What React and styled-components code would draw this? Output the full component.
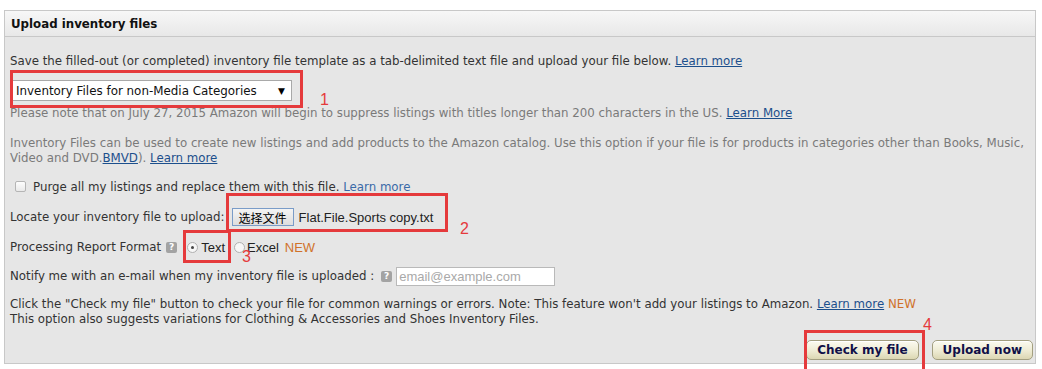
import React from "react";
import styled, { createGlobalStyle } from "styled-components";

const Global = createGlobalStyle`
  html, body {
    margin: 0;
    padding: 0;
    background: #fff;
  }
  body {
    font-family: "DejaVu Sans", Verdana, sans-serif;
    font-size: 11.8px;
    color: #333;
  }
`;

const Page = styled.div`
  position: relative;
  width: 1042px;
  height: 369px;
  overflow: hidden;
  padding: 10px 6px 0 4px;
  box-sizing: border-box;
`;

const Panel = styled.div`
  border: 1px solid #c8c8c8;
  background: #e6e6e6;
`;

const Header = styled.div`
  height: 25px;
  display: flex;
  align-items: center;
  padding: 0 6px;
  background: linear-gradient(#f7f7f7, #e8e8e8);
  border-bottom: 1px solid #c8c8c8;
  font-weight: bold;
  color: #111;
  font-size: 11.8px;
`;

const Body = styled.div`
  padding: 17px 2px 3px 5px;
`;

const Line = styled.div`
  margin-top: ${(p) => p.$mt || 0}px;
  line-height: 15px;
  white-space: nowrap;
  color: ${(p) => (p.$muted ? "#7a7a7a" : "#333")};
`;

const Row = styled.div`
  margin-top: ${(p) => p.$mt || 0}px;
  height: ${(p) => p.$h || 15}px;
  display: flex;
  align-items: center;
  white-space: nowrap;
`;

const Link = styled.a`
  color: ${(p) => (p.$plain ? "#3a6aa8" : "#1c4f8c")};
  text-decoration: ${(p) => (p.$plain ? "none" : "underline")};
  cursor: pointer;
`;

const New = styled.span`
  color: #d0722b;
`;

const Select = styled.div`
  margin-top: 11px;
  width: 280px;
  height: 21px;
  margin-left: 2px;
  box-sizing: border-box;
  background: #fff;
  border: 1px solid #a9a9a9;
  display: flex;
  align-items: center;
  justify-content: space-between;
  padding: 0 6px 0 3px;
  color: #111;
  font-size: 11.9px;
`;

const Arrow = styled.span`
  font-size: 9px;
  color: #000;
`;

const CheckBox = styled.span`
  width: 9px;
  height: 9px;
  border: 1px solid #b5b5b5;
  border-radius: 2px;
  background: linear-gradient(#fdfdfd, #e9e9e9);
  margin: 0 7px 0 5px;
`;

const FileButton = styled.span`
  margin-left: 7px;
  height: 18px;
  box-sizing: border-box;
  padding: 0 6px;
  display: flex;
  align-items: center;
  border: 1px solid #7a9cc8;
  background: linear-gradient(#f4f4f4, #dedede);
  font-family: "Noto Sans CJK SC", sans-serif;
  font-size: 12px;
  color: #000;
`;

const Sans = styled.span`
  font-family: "Liberation Sans", Arial, sans-serif;
  font-size: ${(p) => p.$size || 13}px;
  color: ${(p) => p.$color || "#222"};
  margin-left: ${(p) => p.$ml || 0}px;
`;

const Help = styled.span`
  width: 11px;
  height: 11px;
  border-radius: 2px;
  background: #a3a3a3;
  color: #fff;
  font-size: 9px;
  font-weight: bold;
  display: inline-flex;
  align-items: center;
  justify-content: center;
  margin: 0 ${(p) => p.$mr || 5}px 0 ${(p) => p.$ml || 5}px;
  line-height: 1;
`;

const Radio = styled.span`
  width: 9px;
  height: 9px;
  border-radius: 50%;
  border: 1px solid #b0b0b0;
  background: #f7f7f7;
  display: inline-flex;
  align-items: center;
  justify-content: center;
  margin: 0 ${(p) => p.$mr || 2}px 0 ${(p) => p.$ml || 0}px;
  &::after {
    content: "";
    width: 3px;
    height: 3px;
    border-radius: 50%;
    background: ${(p) => (p.$on ? "#444" : "transparent")};
  }
`;

const Email = styled.input`
  width: 159px;
  height: 19px;
  box-sizing: border-box;
  border: 1px solid #b9b9b9;
  background: #fff;
  padding: 0 2px;
  font-family: "Liberation Sans", Arial, sans-serif;
  font-size: 13px;
  outline: none;
  &::placeholder {
    color: #a9a9a9;
  }
`;

const Actions = styled.div`
  margin-top: 13px;
  display: flex;
  justify-content: flex-end;
  gap: 13px;
`;

const Button = styled.button`
  height: 20px;
  padding: 0 10px;
  border: 1px solid #a39f80;
  border-radius: 5px;
  background: linear-gradient(#fbfaf0 0%, #eeebd3 55%, #dcd7b3 100%);
  box-shadow: inset 0 1px 0 #fff;
  font-family: "DejaVu Sans", Verdana, sans-serif;
  font-weight: bold;
  font-size: 12px;
  color: #101048;
  cursor: pointer;
`;

const Mark = styled.div`
  position: absolute;
  left: ${(p) => p.$x}px;
  top: ${(p) => p.$y}px;
  width: ${(p) => p.$w}px;
  height: ${(p) => p.$h}px;
  box-sizing: border-box;
  border: 3px solid #e53a3c;
  pointer-events: none;
`;

const Num = styled.span`
  position: absolute;
  left: ${(p) => p.$x}px;
  top: ${(p) => p.$y}px;
  color: #e53a3c;
  font-family: "Liberation Sans", Arial, sans-serif;
  font-size: 16px;
  line-height: 1;
`;

export default function App() {
  return (
    <>
      <Global />
      <Page>
        <Panel>
          <Header>Upload inventory files</Header>
          <Body>
            <Line>
              Save the filled-out (or completed) inventory file template as a tab-delimited text file and upload your file below.{" "}
              <Link>Learn more</Link>
            </Line>
            <Select>
              <span>Inventory Files for non-Media Categories</span>
              <Arrow>▼</Arrow>
            </Select>
            <Line $mt={5} $muted>
              Please note that on July 27, 2015 Amazon will begin to suppress listings with titles longer than 200 characters in the US.{" "}
              <Link>Learn More</Link>
            </Line>
            <Line $mt={15} $muted>
              Inventory Files can be used to create new listings and add products to the Amazon catalog. Use this option if your file is for products in categories other than Books, Music,
              <br />
              Video and DVD.<Link>BMVD</Link>). <Link>Learn more</Link>
            </Line>
            <Row $mt={13}>
              <CheckBox />
              Purge all my listings and replace them with this file.&nbsp;<Link $plain>Learn more</Link>
            </Row>
            <Row $mt={14} $h={18}>
              Locate your inventory file to upload:
              <FileButton>选择文件</FileButton>
              <Sans $ml={5}>Flat.File.Sports copy.txt</Sans>
            </Row>
            <Row $mt={13} $h={16}>
              Processing Report Format
              <Help $ml={5} $mr={10}>?</Help>
              <Radio $on $mr={3} />
              <Sans>Text</Sans>
              <Radio $ml={9} $mr={2} />
              <Sans>Excel</Sans>
              <Sans $ml={6} $color="#d0722b">NEW</Sans>
            </Row>
            <Row $mt={11} $h={20}>
              Notify me with an e-mail when my inventory file is uploaded :
              <Help $ml={7} $mr={4}>?</Help>
              <Email placeholder="email@example.com" />
            </Row>
            <Line $mt={11}>
              Click the "Check my file" button to check your file for common warnings or errors. Note: This feature won't add your listings to Amazon.{" "}
              <Link>Learn more</Link> <New>NEW</New>
              <br />
              This option also suggests variations for Clothing &amp; Accessories and Shoes Inventory Files.
            </Line>
            <Actions>
              <Button>Check my file</Button>
              <Button>Upload now</Button>
            </Actions>
          </Body>
        </Panel>
        <Mark $x={10} $y={70} $w={293} $h={38} />
        <Num $x={320} $y={92}>1</Num>
        <Mark $x={226} $y={193} $w={222} $h={39} />
        <Num $x={460} $y={221}>2</Num>
        <Mark $x={183} $y={230} $w={48} $h={33} />
        <Num $x={242} $y={249}>3</Num>
        <Mark $x={804} $y={330} $w={121} $h={42} />
        <Num $x={923} $y={317}>4</Num>
      </Page>
    </>
  );
}
